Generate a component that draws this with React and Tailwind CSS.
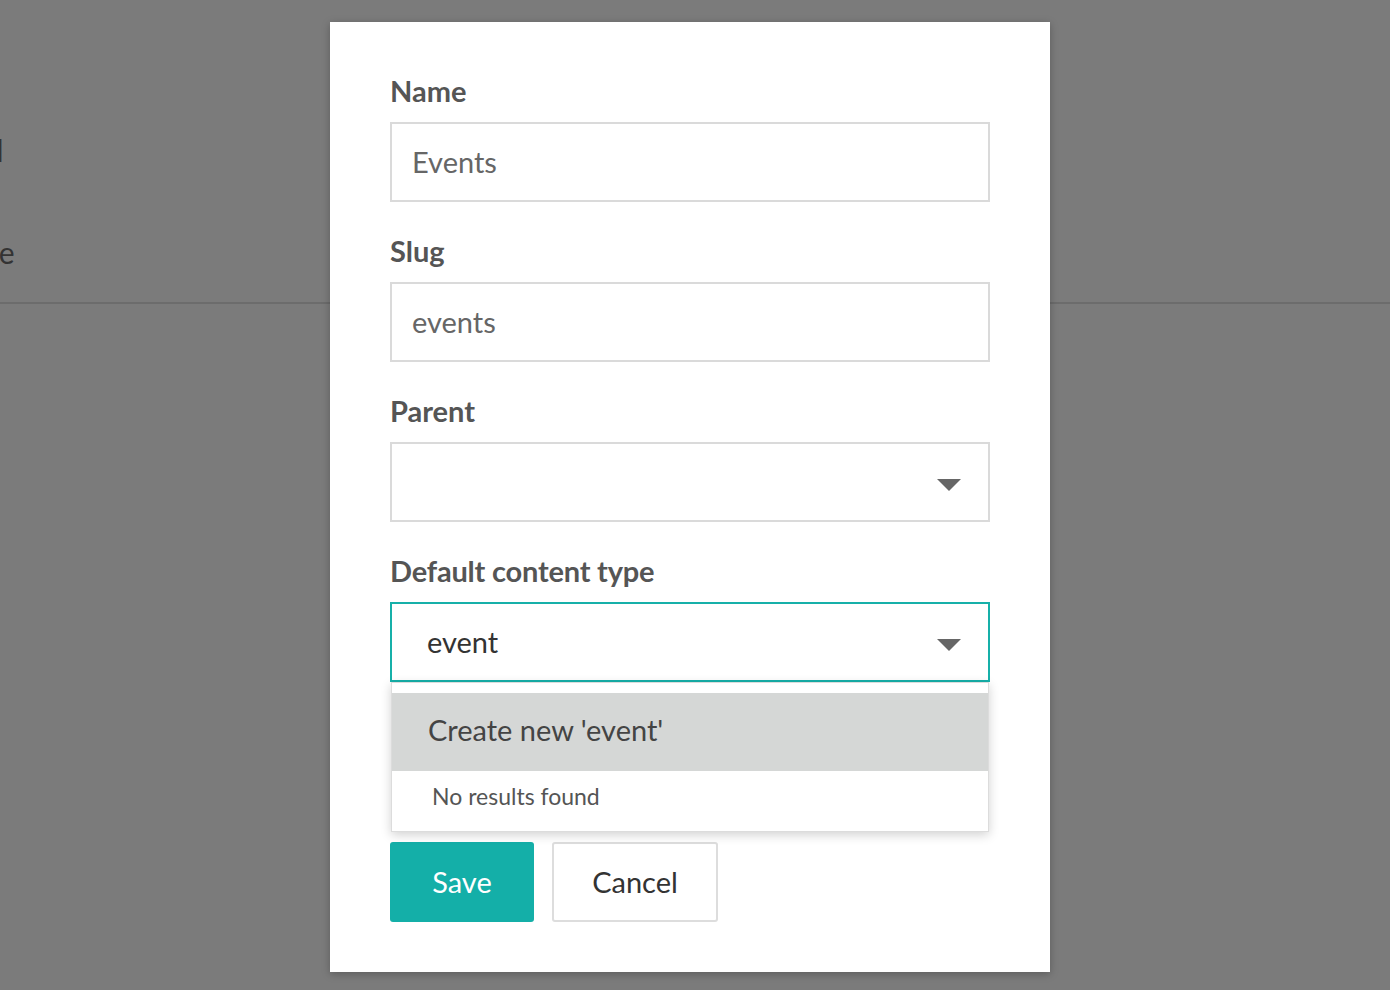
export default function App() {
  const font = { fontFamily: "Lato, 'Open Sans', sans-serif" };
  const Arrow = () => (
    <div className="mt-[6px] w-0 h-0 border-l-[12px] border-r-[12px] border-t-[12px] border-l-transparent border-r-transparent border-t-[#666]" />
  );
  return (
    <div className="relative w-[1390px] h-[990px] bg-[#7b7b7b] overflow-hidden" style={font}>
      {/* background page */}
      <div className="flex flex-col">
        <div className="h-[130px]" />
        <div className="h-[40px] overflow-hidden">
          <div className="ml-[-106px] text-[30px] font-bold leading-[40px] text-[#333] whitespace-nowrap">Channel</div>
        </div>
        <div className="h-[60px]" />
        <div className="h-[44px] overflow-hidden">
          <div className="ml-[-105px] text-[30px] leading-[44px] text-[#333] whitespace-nowrap">Template</div>
        </div>
        <div className="h-[28px]" />
        <div className="h-[2px] bg-[#6c6c6c]" />
      </div>

      {/* modal */}
      <div className="absolute left-[330px] top-[22px] w-[720px] h-[950px] bg-white px-[60px] pt-[50px] shadow-[0_2px_8px_rgba(0,0,0,0.25)]">
        <div className="mb-[30px]">
          <div className="h-[40px] leading-[38px] text-[29px] font-bold text-[#555] mb-[10px]">Name</div>
          <div className="h-[80px] border-2 border-[#dadada] px-[20px] flex items-center text-[29px] text-[#666]">Events</div>
        </div>
        <div className="mb-[30px]">
          <div className="h-[40px] leading-[38px] text-[29px] font-bold text-[#555] mb-[10px]">Slug</div>
          <div className="h-[80px] border-2 border-[#dadada] px-[20px] flex items-center text-[29px] text-[#666]">events</div>
        </div>
        <div className="mb-[30px]">
          <div className="h-[40px] leading-[38px] text-[29px] font-bold text-[#555] mb-[10px]">Parent</div>
          <div className="h-[80px] border-2 border-[#dadada] pl-[35px] pr-[27px] flex items-center justify-end">
            <Arrow />
          </div>
        </div>
        <div className="mb-[160px]">
          <div className="h-[40px] leading-[38px] text-[29px] font-bold text-[#555] mb-[10px] tracking-[-0.2px]">Default content type</div>
          <div className="relative">
            <div className="h-[80px] border-2 border-[#16b0a9] pl-[35px] pr-[27px] flex items-center justify-between text-[29px] text-[#333]">
              <span>event</span>
              <Arrow />
            </div>
            <div className="absolute left-[1px] right-[1px] top-[80px] h-[150px] bg-white border border-[#dcdcdc] pt-[10px] shadow-[0_3px_10px_rgba(0,0,0,0.18)] z-10">
              <div className="h-[78px] bg-[#d5d7d6] pl-[36px] pb-[4px] flex items-center text-[29px] text-[#444]">Create new 'event'</div>
              <div className="h-[60px] pl-[40px] pb-[10px] flex items-center text-[23px] text-[#555]">No results found</div>
            </div>
          </div>
        </div>
        <div className="flex gap-[18px]">
          <button className="w-[144px] h-[80px] bg-[#14afa8] text-white text-[29px] rounded-[3px]">Save</button>
          <button className="w-[166px] h-[80px] bg-white border-2 border-[#dddddd] text-[#333] text-[29px] rounded-[3px]">Cancel</button>
        </div>
      </div>
    </div>
  );
}
